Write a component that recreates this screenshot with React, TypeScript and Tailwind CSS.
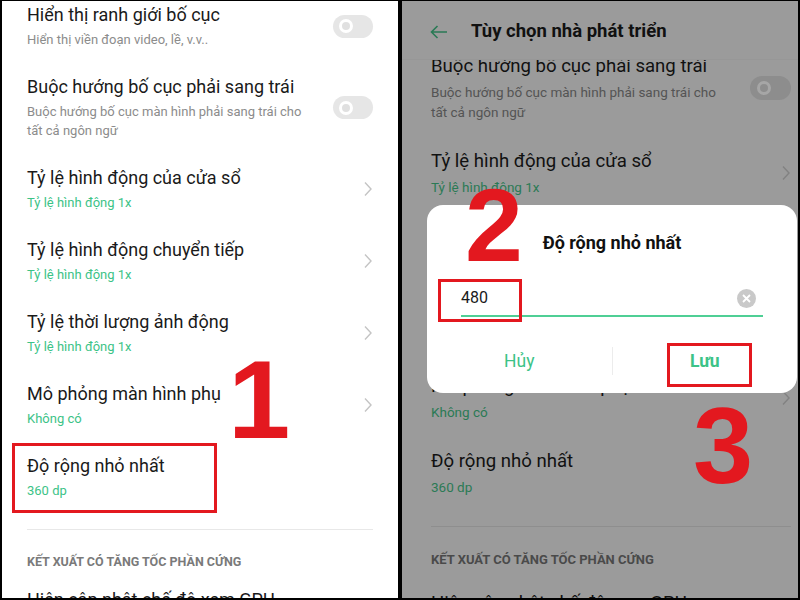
import React from "react";

type RowProps = {
    title: string;
    sub: string[];
    green?: boolean;
    right?: React.ReactNode;
};

const font = { fontFamily: "Roboto, 'Noto Sans', sans-serif" };

const Chevron = ({ dim }: { dim?: boolean }) => (
    <svg width="10" height="16" viewBox="0 0 10 16" className="shrink-0">
        <path d="M2 1.5 L8 8 L2 14.5" fill="none" stroke={dim ? "#828282" : "#c4c4c4"} strokeWidth="1.4" />
    </svg>
);

const Toggle = ({ dim }: { dim?: boolean }) => (
    <div
        className={
            dim
                ? "flex items-center w-[41px] h-[24px] rounded-full bg-[#8d8d8d] pl-[7px] shrink-0"
                : "flex items-center w-[40px] h-[23px] rounded-full bg-[#e6e6e6] pl-[6px] shrink-0"
        }
    >
        <div
            className={
                dim
                    ? "w-[14px] h-[14px] rounded-full border-[3px] border-[#a6a6a6] bg-[#8d8d8d]"
                    : "w-[14px] h-[14px] rounded-full border-[3px] border-white bg-[#e0e0e0]"
            }
        />
    </div>
);

// hàng cài đặt bên trái (nền trắng)
const Row = ({ title, sub, green, right }: RowProps) => (
    <div className="flex items-center justify-between">
        <div className="flex flex-col">
            <div className="text-[18px] leading-[24px] text-[#1a1a1a]">{title}</div>
            <div className={green ? "mt-[3px] text-[13px] leading-[19px] text-[#3cc387]" : "mt-[3px] text-[13px] leading-[19px] text-[#8c8c8c]"}>
                {sub.map((s) => (
                    <div key={s}>{s}</div>
                ))}
            </div>
        </div>
        {right}
    </div>
);

// hàng cài đặt bên phải (bị làm mờ)
const DimRow = ({ title, sub, green, right }: RowProps) => (
    <div className="flex items-center justify-between">
        <div className="flex flex-col">
            <div className="text-[18.6px] leading-[25px] text-[#111111]">{title}</div>
            <div className={green ? "mt-[2.5px] text-[13.5px] leading-[20px] text-[#2b7a55]" : "mt-[2.5px] text-[13.5px] leading-[20px] text-[#545454]"}>
                {sub.map((s) => (
                    <div key={s}>{s}</div>
                ))}
            </div>
        </div>
        {right}
    </div>
);

const RedBox = ({ className }: { className: string }) => (
    <div className={"absolute border-[3px] border-[#e3181f] " + className} />
);

const digit = { fontFamily: "'Liberation Sans', Arial, sans-serif" };

export default function App() {
    return (
        <div className="flex w-[800px] h-[600px] bg-black gap-[4px] pl-[2px] pr-[2px] pt-[1px] pb-[2px]" style={font}>
            {/* bảng trái */}
            <div className="relative w-[396px] h-full bg-white overflow-hidden">
                <div className="flex flex-col pt-[2px] pl-[25px] pr-[25px]">
                    <div className="flex flex-col gap-[26px]">
                        <Row title="Hiển thị ranh giới bố cục" sub={["Hiển thị viền đoạn video, lề, v.v.."]} right={<Toggle />} />
                        <Row
                            title="Buộc hướng bố cục phải sang trái"
                            sub={["Buộc hướng bố cục màn hình phải sang trái cho", "tất cả ngôn ngữ"]}
                            right={<Toggle />}
                        />
                        <Row title="Tỷ lệ hình động của cửa sổ" sub={["Tỷ lệ hình động 1x"]} green right={<Chevron />} />
                        <Row title="Tỷ lệ hình động chuyển tiếp" sub={["Tỷ lệ hình động 1x"]} green right={<Chevron />} />
                        <Row title="Tỷ lệ thời lượng ảnh động" sub={["Tỷ lệ hình động 1x"]} green right={<Chevron />} />
                        <Row title="Mô phỏng màn hình phụ" sub={["Không có"]} green right={<Chevron />} />
                        <Row title="Độ rộng nhỏ nhất" sub={["360 dp"]} green />
                    </div>
                    <div className="mt-[29px] h-px bg-[#e8e8e8]" />
                    <div className="mt-[23px] text-[12.5px] leading-[18px] font-bold text-[#7a7a7a]">KẾT XUẤT CÓ TĂNG TỐC PHẦN CỨNG</div>
                    <div className="mt-[17px] text-[18px] leading-[24px] text-[#1a1a1a] whitespace-nowrap">Hiện cập nhật chế độ xem GPU</div>
                </div>

                <RedBox className="left-[10px] top-[442px] w-[205px] h-[70px]" />
                <div className="absolute left-[226px] top-[343px] text-[112px] leading-none font-bold text-[#e3181f]" style={digit}>
                    1
                </div>
            </div>

            {/* bảng phải */}
            <div className="relative w-[396px] h-full bg-[#9b9b9b] overflow-hidden flex flex-col">
                <div className="relative z-10 h-[59px] shrink-0 flex items-center pl-[28px] pt-[3px] bg-[#9b9b9b] border-b border-[#979797]">
                    <svg width="18" height="14" viewBox="0 0 18 14">
                        <path d="M17 7 H1.5 M7.5 1 L1.5 7 L7.5 13" fill="none" stroke="#2a7a55" strokeWidth="1.6" />
                    </svg>
                    <div className="ml-[23px] text-[18.5px] font-bold text-[#111111]">Tùy chọn nhà phát triển</div>
                </div>
                <div className="flex-1 overflow-hidden">
                    <div className="flex flex-col mt-[-6px] pl-[29px] pr-[7px]">
                        <div className="flex flex-col gap-[27.5px]">
                            <DimRow
                                title="Buộc hướng bố cục phải sang trái"
                                sub={["Buộc hướng bố cục màn hình phải sang trái cho", "tất cả ngôn ngữ"]}
                                right={<Toggle dim />}
                            />
                            <DimRow title="Tỷ lệ hình động của cửa sổ" sub={["Tỷ lệ hình động 1x"]} green right={<Chevron dim />} />
                            <DimRow title="Tỷ lệ hình động chuyển tiếp" sub={["Tỷ lệ hình động 1x"]} green right={<Chevron dim />} />
                            <DimRow title="Tỷ lệ thời lượng ảnh động" sub={["Tỷ lệ hình động 1x"]} green right={<Chevron dim />} />
                            <DimRow title="Mô phỏng màn hình phụ" sub={["Không có"]} green right={<Chevron dim />} />
                            <DimRow title="Độ rộng nhỏ nhất" sub={["360 dp"]} green />
                        </div>
                        <div className="mt-[29px] h-px bg-[#8e8e8e]" />
                        <div className="mt-[24px] text-[13px] leading-[18px] font-bold text-[#4a4a4a]">KẾT XUẤT CÓ TĂNG TỐC PHẦN CỨNG</div>
                        <div className="mt-[22px] text-[18.6px] leading-[25px] text-[#111111] whitespace-nowrap">Hiện cập nhật chế độ xem GPU</div>
                    </div>
                </div>

                {/* hộp thoại */}
                <div className="absolute z-20 left-[25px] top-[204px] w-[370px] h-[188px] rounded-[16px] bg-white flex flex-col">
                    <div className="pt-[26px] text-center text-[18px] leading-[24px] font-bold text-[#111111]">Độ rộng nhỏ nhất</div>
                    <div className="mt-[26px] mx-[34px] flex items-center justify-between h-[36px] border-b-2 border-[#4fcf95]">
                        <span className="text-[16px] text-[#1a1a1a]">480</span>
                        <div className="mr-[7px] w-[19px] h-[19px] rounded-full bg-[#c9c9c9] flex items-center justify-center">
                            <svg width="9" height="9" viewBox="0 0 9 9">
                                <path d="M1 1 L8 8 M8 1 L1 8" stroke="white" strokeWidth="1.8" />
                            </svg>
                        </div>
                    </div>
                    <div className="mt-[24px] h-[40px] flex items-center">
                        <div className="flex-1 text-center text-[17.5px] text-[#3cc387]">Hủy</div>
                        <div className="w-px h-[28px] bg-[#ececec]" />
                        <div className="flex-1 text-center text-[17.5px] font-bold text-[#3cc387]">Lưu</div>
                    </div>
                </div>

                <RedBox className="z-30 left-[36px] top-[278px] w-[84px] h-[43px]" />
                <RedBox className="z-30 left-[265px] top-[342px] w-[85px] h-[44px]" />
                <div className="absolute z-30 left-[63px] top-[172px] text-[104px] leading-none font-bold text-[#e3181f]" style={digit}>
                    2
                </div>
                <div className="absolute z-30 left-[291px] top-[391px] text-[108px] leading-none font-bold text-[#e3181f]" style={digit}>
                    3
                </div>
            </div>
        </div>
    );
}
